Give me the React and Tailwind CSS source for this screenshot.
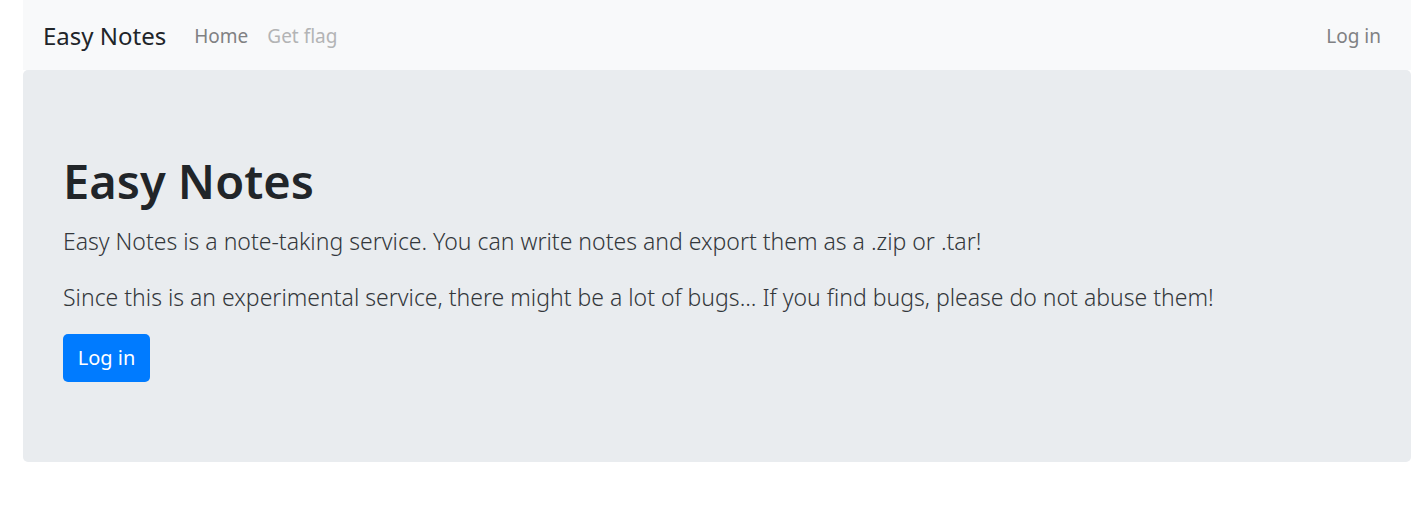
import React from 'react';

const font = { fontFamily: '"Noto Sans", "Open Sans", sans-serif' };

export default function App() {
  return (
    <div className="min-h-screen bg-white" style={font}>
      {/* Navbar */}
      <nav className="ml-[23px] w-[1388px] h-[70px] bg-[#f8f9fa] flex items-center pl-[20px] pr-[30px] pt-[2px]">
        <a className="text-[24px] text-[#212529] mr-[28px]">Easy Notes</a>
        <div className="flex items-center gap-[19px] text-[19px]">
          <a className="text-[#808183]">Home</a>
          <a className="text-[#b3b4b5]">Get flag</a>
        </div>
        <a className="ml-auto text-[19px] text-[#808183]">Log in</a>
      </nav>

      {/* Jumbotron */}
      <section className="ml-[23px] w-[1388px] h-[392px] bg-[#e9ecef] rounded-[5px] px-[40px] pt-[83px]">
        <h1 className="text-[47px] leading-[1.2] font-semibold text-[#212529]">Easy Notes</h1>
        <p className="text-[23px] font-light text-[#33373b] leading-[1.5] mt-[15px]">
          Easy Notes is a note-taking service. You can write notes and export them as a .zip or .tar!
        </p>
        <p className="text-[23px] font-light text-[#33373b] leading-[1.5] mt-[21px]">
          Since this is an experimental service, there might be a lot of bugs... If you find bugs, please do not abuse them!
        </p>
        <button className="mt-[20px] h-[48px] w-[87px] bg-[#007bff] text-white text-[20px] rounded-[5px]">
          Log in
        </button>
      </section>
    </div>
  );
}
